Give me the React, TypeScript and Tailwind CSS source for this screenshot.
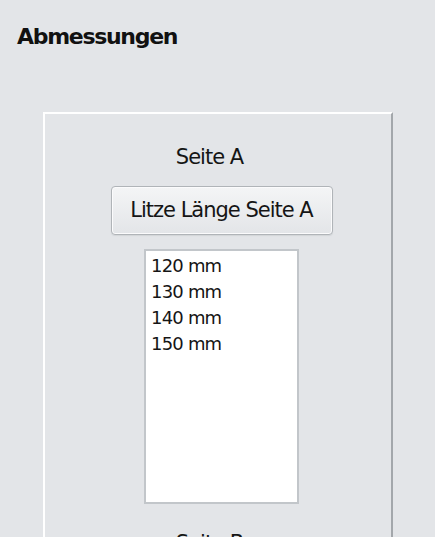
// Abmessungen – Litzenlänge Auswahl (Seite A / Seite B)

const LAENGEN = ['120 mm', '130 mm', '140 mm', '150 mm'];

const font = { fontFamily: '"DejaVu Sans", Tahoma, Verdana, sans-serif' };

function SeitePanel({ seite }: { seite: string }) {
  return (
    <div className="flex flex-col items-center">
      <div className="mr-[24px] text-[21px] leading-[25px] tracking-[-1px] text-[#151515]">
        Seite {seite}
      </div>
      <button className="mt-[16px] h-[49px] w-[222px] rounded-[4px] border border-[#b0b4b8] bg-gradient-to-b from-[#f4f5f6] to-[#e3e5e8] text-[21px] tracking-[-1px] text-[#151515] shadow-[inset_0_0_0_1px_#fbfbfc,0_1px_1px_#d2d5d8]">
        Litze Länge Seite {seite}
      </button>
      <ul className="mt-[14px] h-[255px] w-[155px] border-2 border-[#c2c6ca] bg-white px-[5px] pt-[2px]">
        {LAENGEN.map((l) => (
          <li key={l} className="text-[18px] leading-[26px] tracking-[-0.8px] text-[#151515]">
            {l}
          </li>
        ))}
      </ul>
    </div>
  );
}

export default function App() {
  return (
    <div className="h-[537px] w-[435px] overflow-hidden bg-[#e3e5e8]" style={font}>
      <h2 className="pl-[17px] pt-[24px] text-[22px] font-bold leading-[26px] tracking-[-1.3px] text-[#111]">
        Abmessungen
      </h2>

      {/* Gruppenrahmen */}
      <div className="ml-[43px] mt-[62px] w-[350px] border-l-2 border-t-2 border-r-2 border-l-white border-t-white border-r-[#a3a7ab] pl-[7px] pt-[31px]">
        <SeitePanel seite="A" />
        <div className="mt-[27px]">
          <SeitePanel seite="B" />
        </div>
      </div>
    </div>
  );
}
